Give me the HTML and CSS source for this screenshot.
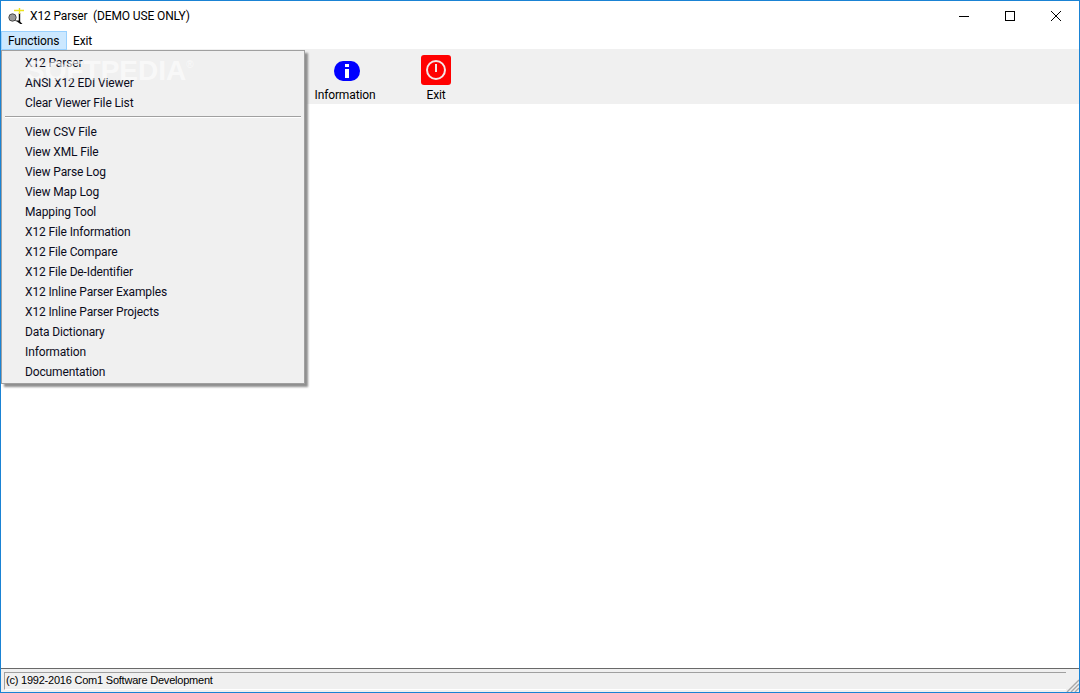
FILE: index.html
```html
<!DOCTYPE html>
<html lang="en">
<head>
<meta charset="utf-8">
<title>X12 Parser</title>
<link rel="stylesheet" href="styles.css">
</head>
<body>
<div class="window">
  <header class="titlebar">
    <svg class="appicon" width="16" height="16" viewBox="0 0 16 16">
      <circle cx="4.5" cy="9.5" r="3.7" fill="#9a9a9a" stroke="#333" stroke-width=".8"/>
      <path d="M6 12.5l3 1 4 3h2l-4-4z" fill="#0a0a0a"/>
      <path d="M11.5 5v9" stroke="#0a0a0a" stroke-width="1.4" fill="none"/>
      <path d="M11.5 0v6M6 2.5h10" stroke="#ece21c" stroke-width="1.4" fill="none"/>
    </svg>
    <span class="title">X12 Parser&nbsp; (DEMO USE ONLY)</span>
    <div class="controls">
      <span class="ctl"><svg width="12" height="12" viewBox="0 0 12 12"><path d="M1 6.5h10" stroke="#000" fill="none"/></svg></span>
      <span class="ctl"><svg width="12" height="12" viewBox="0 0 12 12"><rect x="1.5" y="1.5" width="9" height="9" stroke="#000" fill="none"/></svg></span>
      <span class="ctl"><svg width="12" height="12" viewBox="0 0 12 12"><path d="M1 1l10 10M11 1L1 11" stroke="#000" fill="none"/></svg></span>
    </div>
  </header>
  <nav class="menubar">
    <span class="menuitem active">Functions</span>
    <span class="menuitem">Exit</span>
  </nav>
  <div class="toolbar">
    <div class="tool tool-info">
      <svg class="info-icon" width="26" height="20" viewBox="0 0 26 20"><rect width="26" height="20" rx="9" ry="10" fill="#0000ff"/><rect x="11" y="3" width="4" height="3" fill="#fff"/><rect x="11" y="8" width="4" height="9" fill="#fff"/></svg>
      <span>Information</span>
    </div>
    <div class="tool tool-exit">
      <svg width="30" height="30" viewBox="0 0 30 30"><rect width="30" height="30" rx="3" fill="#ff0000"/><circle cx="15" cy="15" r="9" fill="none" stroke="#f4e6e6" stroke-width="2"/><rect x="14" y="9" width="2" height="8" fill="#f4e6e6"/></svg>
      <span>Exit</span>
    </div>
  </div>
  <main class="content"></main>
  <footer class="statusbar">
    <div class="statuspane">(c) 1992-2016 Com1 Software Development</div>
    <svg class="grip" width="13" height="13" viewBox="0 0 13 13"><path d="M13 1L1 13M13 5L5 13M13 9L9 13" stroke="#a8a8a8" stroke-width="1.4" fill="none"/></svg>
  </footer>
  <div class="popup">
    <ul class="group first">
      <li>X12 Parser</li>
      <li>ANSI X12 EDI Viewer</li>
      <li>Clear Viewer File List</li>
    </ul>
    <hr class="sep">
    <ul class="group">
      <li>View CSV File</li>
      <li>View XML File</li>
      <li>View Parse Log</li>
      <li>View Map Log</li>
      <li>Mapping Tool</li>
      <li>X12 File Information</li>
      <li>X12 File Compare</li>
      <li>X12 File De-Identifier</li>
      <li>X12 Inline Parser Examples</li>
      <li>X12 Inline Parser Projects</li>
      <li>Data Dictionary</li>
      <li>Information</li>
      <li>Documentation</li>
    </ul>
  </div>
  <div class="watermark">SOFTPEDIA<sup>®</sup></div>
</div>
</body>
</html>
```
FILE: styles.css
```css
html, body { margin: 0; padding: 0; height: 100%; }
body { background: #fff; font-family: Roboto, "Noto Sans", sans-serif; font-size: 12px; color: #000; letter-spacing: -0.13px; }
.window {
  position: relative; box-sizing: border-box; width: 1080px; height: 693px;
  border: 1px solid #1a83d4; display: flex; flex-direction: column; overflow: hidden; background: #fff;
}
.titlebar { height: 30px; display: flex; align-items: center; padding-left: 7px; flex: none; }
.appicon { flex: none; margin-top: -1px; }
.title { margin-left: 6px; margin-top: -1px; }
.controls { margin-left: auto; display: flex; margin-top: -1px; }
.ctl { width: 46px; height: 30px; display: flex; align-items: center; justify-content: center; }
.menubar { height: 18px; display: flex; flex: none; background: #fff; position: relative; z-index: 1; }
.menuitem { padding: 0 6px; line-height: 21px; box-sizing: border-box; height: 19px; }
.menuitem.active { background: #cce8ff; border: 1px solid #99d1ff; line-height: 19px; padding: 0 6px; width: 66px; }
.toolbar { height: 55px; background: #f0f0f0; display: flex; flex: none; padding-left: 302px; }
.tool { display: flex; flex-direction: column; align-items: center; }
.tool span { line-height: 16px; }
.tool-info { width: 84px; padding-top: 12px; }
.info-icon { margin-left: 4px; }
.tool-info span { margin-top: 6px; }
.tool-exit { width: 98px; padding-top: 6px; }
.tool-exit span { margin-top: 2px; }
.content { flex: 1; background: #fff; }
.statusbar {
  height: 24px; flex: none; background: #f0f0f0; border-top: 1px solid #696969; box-sizing: border-box;
  display: flex; position: relative; padding-top: 3px;
}
.statuspane {
  flex: none; width: 1062px; height: 18px; box-sizing: border-box; margin-left: 3px; border-top: 1px solid #a0a0a0; border-left: 1px solid #a0a0a0;
  border-bottom: 1px solid #fff; font-family: "Liberation Sans", sans-serif; font-size: 11px; line-height: 14px; padding-left: 1px; letter-spacing: -0.22px;
}
.grip { position: absolute; right: 0; bottom: 0; }
.popup {
  position: absolute; left: 0; top: 49px; width: 302px; height: 332px; background: #f0f0f0;
  border: 1px solid #a0a0a0; box-shadow: 3px 3px 2px #8f8f8f; z-index: 2;
}
.group { list-style: none; margin: 0; padding: 0; }
.group.first { padding-top: 2px; }
.group li { height: 20px; line-height: 20px; padding-left: 23px; color: #0c0c1c; }
.sep { margin: 3px 3px 4px; border: 0; border-top: 1px solid #a0a0a0; border-bottom: 1px solid #fff; height: 0; }
.watermark {
  position: absolute; left: 25px; top: 54px; font-family: "Liberation Sans", sans-serif; font-size: 28px; font-weight: 700;
  color: rgba(255,255,255,.6); letter-spacing: 0; pointer-events: none; z-index: 3;
}
.watermark sup { font-size: 10px; vertical-align: 12px; font-weight: 400; }
```
